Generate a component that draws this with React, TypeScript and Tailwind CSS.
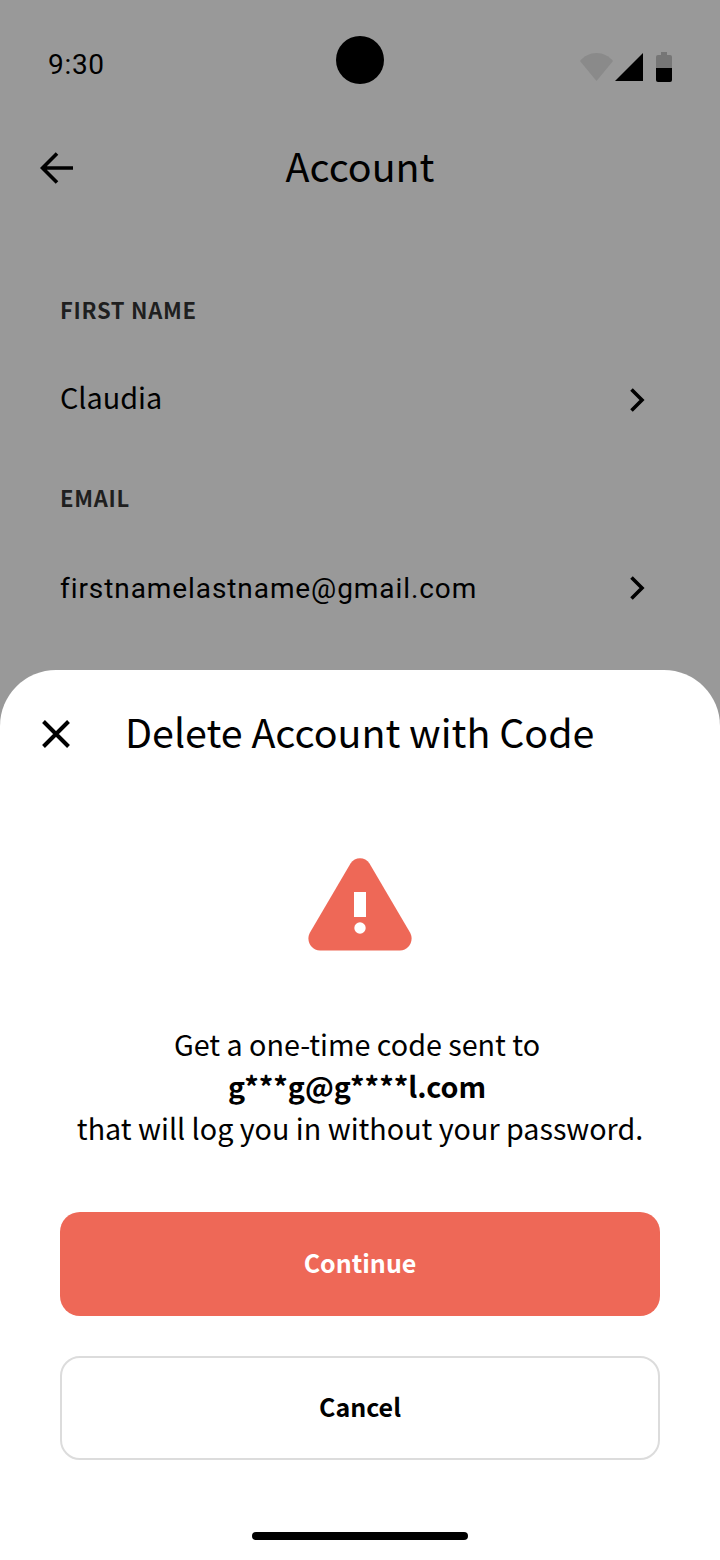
import React from 'react';

const sourceFont = "font-['Noto_Sans_CJK_SC','Noto_Sans',sans-serif]";
const robotoFont = "font-['Roboto',sans-serif]";

function ChevronRight() {
  return (
    <svg width="16" height="24" viewBox="0 0 16 24" fill="none" stroke="#000" strokeWidth="3.6">
      <path d="M2.5 1.5 L13 12 L2.5 22.5" />
    </svg>
  );
}

function StatusBar() {
  return (
    <div className="flex items-center justify-between h-[60px] mt-[34px] px-[48px]">
      <span className={`${robotoFont} text-[28px] leading-[56px] tracking-[0.7px] text-black w-[120px] mt-[2px]`}>9:30</span>
      <div className="w-[48px] h-[48px] rounded-full bg-black -mt-[8px]" />
      <div className="flex items-end justify-end w-[120px] mt-[6px]">
        <svg width="33" height="28" viewBox="0 0 33 28" className="mb-[1px]">
          <path d="M16.5 28 L0 8 C4 3 10 0 16.5 0 C23 0 29 3 33 8 Z" fill="#8a8a8a" />
        </svg>
        <svg width="28" height="28" viewBox="0 0 28 28" className="ml-[2px] mb-[1px]">
          <path d="M0 28 L28 0 V28 Z" fill="#000" />
        </svg>
        <svg width="16" height="30" viewBox="0 0 16 30" className="ml-[13px]">
          <path d="M5 0 H11 V3 H14 Q16 3 16 5 V16 H0 V5 Q0 3 2 3 H5 Z" fill="#767676" />
          <path d="M0 16 H16 V28 Q16 30 14 30 H2 Q0 30 0 28 Z" fill="#000" />
        </svg>
      </div>
    </div>
  );
}

function Field({ label, value, mono }: { label: string; value: string; mono?: boolean }) {
  return (
    <div className="flex flex-col">
      <span className={`${sourceFont} text-[22px] leading-[32px] font-bold tracking-[0.7px] text-[#1f1f1f]`}>{label}</span>
      <div className="flex items-center justify-between h-[80px] mt-[35px] pr-[15px]">
        <span
          className={
            mono
              ? `${robotoFont} text-[28px] leading-[40px] tracking-[0.92px] text-black mt-[2px]`
              : `${sourceFont} text-[28.8px] leading-[40px] text-black mb-[6px]`
          }
        >
          {value}
        </span>
        <ChevronRight />
      </div>
    </div>
  );
}

export default function App() {
  return (
    <div className={`${sourceFont} w-[720px] h-[1560px] bg-[#999999] flex flex-col overflow-hidden`}>
      <StatusBar />

      <div className="flex items-center h-[64px] mt-[41px] px-[40px]">
        <svg width="34" height="32" viewBox="0 0 34 32" fill="none" stroke="#000" strokeWidth="3.6" className="mt-[2px]">
          <path d="M33 16 H3 M17 1.5 L2.5 16 L17 30.5" />
        </svg>
        <span className="flex-1 text-center text-[39.4px] leading-[60px] mb-[4px] text-black pr-[34px]">Account</span>
      </div>

      <div className="flex flex-col gap-[41px] px-[60px] mt-[94px]">
        <Field label="FIRST NAME" value="Claudia" />
        <Field label="EMAIL" value="firstnamelastname@gmail.com" mono />
      </div>

      <div className="mt-auto h-[890px] bg-white rounded-t-[56px] flex flex-col">
        <div className="flex items-center h-[64px] mt-[32px] pl-[42px]">
          <svg width="28" height="28" viewBox="0 0 28 28" fill="none" stroke="#000" strokeWidth="4">
            <path d="M1.5 1.5 L26.5 26.5 M26.5 1.5 L1.5 26.5" />
          </svg>
          <span className="ml-[55px] text-[39.4px] leading-[60px] mb-[6px] text-black">Delete Account with Code</span>
        </div>

        <div className="flex justify-center mt-[92px]">
          <svg width="104" height="94" viewBox="0 0 104 94">
            <path
              d="M42.5 5.5 C46.8 -1.5 57.2 -1.5 61.5 5.5 L102 74.5 C106.5 82.5 101 92.5 92 92.5 H12 C3 92.5 -2.5 82.5 2 74.5 Z"
              fill="#ee6857"
            />
            <rect x="46" y="34" width="12" height="25" fill="#fff" />
            <circle cx="52" cy="70" r="5.7" fill="#fff" />
          </svg>
        </div>

        <div className="mt-[71px] flex flex-col items-center text-[28.7px] leading-[42px] text-black">
          <span className="pr-[6px]">Get a one-time code sent to</span>
          <span className="font-bold pr-[6px]">g***g@g****l.com</span>
          <span>that will log you in without your password.</span>
        </div>

        <div className="mt-[63px] px-[60px] flex flex-col gap-[40px]">
          <button className="h-[104px] pb-[2px] rounded-[20px] bg-[#ee6857] text-white text-[25px] font-bold">
            Continue
          </button>
          <button className="h-[104px] pb-[2px] rounded-[20px] bg-white border-2 border-[#dcdcdc] text-black text-[25px] font-bold">
            Cancel
          </button>
        </div>

        <div className="mt-auto mb-[20px] flex justify-center">
          <div className="w-[216px] h-[8px] rounded-full bg-black" />
        </div>
      </div>
    </div>
  );
}
